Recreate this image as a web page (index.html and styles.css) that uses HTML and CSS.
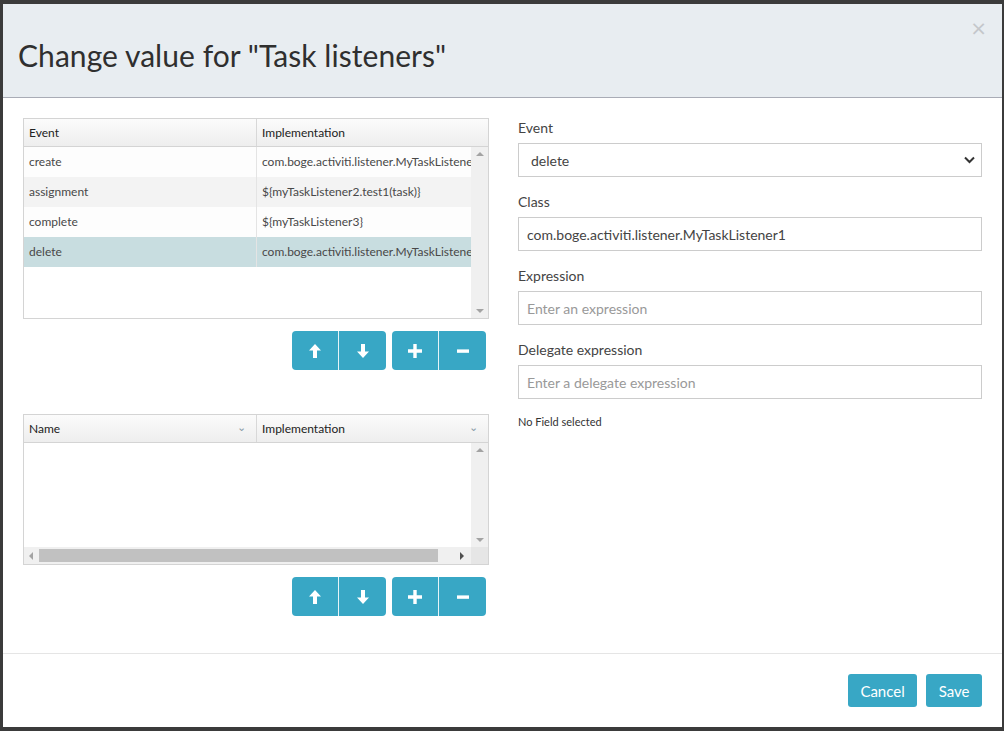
FILE: index.html
```html
<!DOCTYPE html>
<html lang="en">
  <head>
    <meta charset="UTF-8" />
    <title>Change value for "Task listeners"</title>
    <link rel="stylesheet" href="styles.css">
  </head>
  <body>
    <div class="modal">
      <div class="modal-header">
        <h2 class="modal-title">Change value for "Task listeners"</h2>
        <button class="close" type="button">&times;</button>
      </div>

      <div class="modal-body">
        <div class="left-col">
          <!-- listeners grid -->
          <div class="grid grid-listeners">
            <div class="grid-head">
              <div class="cell col-first">Event</div>
              <div class="cell col-second">Implementation</div>
            </div>
            <div class="grid-body">
              <div class="grid-rows">
                <div class="row">
                  <div class="cell col-first">create</div>
                  <div class="cell col-second">com.boge.activiti.listener.MyTaskListener1</div>
                </div>
                <div class="row row-alt">
                  <div class="cell col-first">assignment</div>
                  <div class="cell col-second">${myTaskListener2.test1(task)}</div>
                </div>
                <div class="row">
                  <div class="cell col-first">complete</div>
                  <div class="cell col-second">${myTaskListener3}</div>
                </div>
                <div class="row row-selected">
                  <div class="cell col-first">delete</div>
                  <div class="cell col-second">com.boge.activiti.listener.MyTaskListener1</div>
                </div>
              </div>
              <div class="vscroll">
                <span class="tri tri-up"></span>
                <span class="tri tri-down"></span>
              </div>
            </div>
          </div>

          <div class="grid-actions">
            <div class="btn-group">
              <button class="btn btn-icon" type="button">
                <svg width="12" height="14" viewBox="0 0 12 14"><path d="M6 0 L12 6.5 L8 6.5 L8 14 L4 14 L4 6.5 L0 6.5 Z" fill="#fff"/></svg>
              </button>
              <button class="btn btn-icon" type="button">
                <svg width="12" height="14" viewBox="0 0 12 14"><path d="M6 14 L12 7.5 L8 7.5 L8 0 L4 0 L4 7.5 L0 7.5 Z" fill="#fff"/></svg>
              </button>
            </div>
            <div class="btn-group">
              <button class="btn btn-icon" type="button">
                <svg width="14" height="14" viewBox="0 0 14 14"><path d="M5.3 0 H8.7 V5.3 H14 V8.7 H8.7 V14 H5.3 V8.7 H0 V5.3 H5.3 Z" fill="#fff"/></svg>
              </button>
              <button class="btn btn-icon" type="button">
                <svg width="14" height="14" viewBox="0 0 14 14"><rect x="1" y="5.4" width="12" height="3.4" fill="#fff"/></svg>
              </button>
            </div>
          </div>

          <!-- fields grid -->
          <div class="grid grid-fields">
            <div class="grid-head">
              <div class="cell col-first">Name<span class="sort">&#8964;</span></div>
              <div class="cell col-second">Implementation<span class="sort">&#8964;</span></div>
            </div>
            <div class="grid-body">
              <div class="grid-rows"></div>
              <div class="vscroll">
                <span class="tri tri-up"></span>
                <span class="tri tri-down"></span>
              </div>
            </div>
            <div class="hscroll">
              <span class="tri tri-left"></span>
              <div class="hscroll-thumb"></div>
              <span class="tri tri-right"></span>
              <div class="hscroll-corner"></div>
            </div>
          </div>

          <div class="grid-actions">
            <div class="btn-group">
              <button class="btn btn-icon" type="button">
                <svg width="12" height="14" viewBox="0 0 12 14"><path d="M6 0 L12 6.5 L8 6.5 L8 14 L4 14 L4 6.5 L0 6.5 Z" fill="#fff"/></svg>
              </button>
              <button class="btn btn-icon" type="button">
                <svg width="12" height="14" viewBox="0 0 12 14"><path d="M6 14 L12 7.5 L8 7.5 L8 0 L4 0 L4 7.5 L0 7.5 Z" fill="#fff"/></svg>
              </button>
            </div>
            <div class="btn-group">
              <button class="btn btn-icon" type="button">
                <svg width="14" height="14" viewBox="0 0 14 14"><path d="M5.3 0 H8.7 V5.3 H14 V8.7 H8.7 V14 H5.3 V8.7 H0 V5.3 H5.3 Z" fill="#fff"/></svg>
              </button>
              <button class="btn btn-icon" type="button">
                <svg width="14" height="14" viewBox="0 0 14 14"><rect x="1" y="5.4" width="12" height="3.4" fill="#fff"/></svg>
              </button>
            </div>
          </div>
        </div>

        <div class="right-col">
          <div class="form-group">
            <label class="form-label">Event</label>
            <div class="select">
              <span>delete</span>
              <svg width="11" height="8" viewBox="0 0 11 8"><path d="M1 1.5 L5.5 6 L10 1.5" stroke="#333" stroke-width="2" fill="none"/></svg>
            </div>
          </div>
          <div class="form-group">
            <label class="form-label">Class</label>
            <input class="form-control" type="text" value="com.boge.activiti.listener.MyTaskListener1">
          </div>
          <div class="form-group">
            <label class="form-label">Expression</label>
            <input class="form-control" type="text" placeholder="Enter an expression">
          </div>
          <div class="form-group">
            <label class="form-label">Delegate expression</label>
            <input class="form-control" type="text" placeholder="Enter a delegate expression">
          </div>
          <p class="no-field">No Field selected</p>
        </div>
      </div>

      <div class="modal-footer">
        <button class="btn btn-text" type="button">Cancel</button>
        <button class="btn btn-text" type="button">Save</button>
      </div>
    </div>
  </body>
</html>
```

FILE: styles.css
```css
* {
  margin: 0;
  padding: 0;
  box-sizing: border-box;
}

body {
  font-family: "Lato", "Open Sans", sans-serif;
  background: #3b3b3b;
  color: #333;
  padding: 4px 2px 4px 3px;
  height: 731px;
  overflow: hidden;
}

.modal {
  width: 999px;
  height: 723px;
  background: #fff;
  display: flex;
  flex-direction: column;
}

/* header */
.modal-header {
  height: 94px;
  flex-shrink: 0;
  background: #e8edf1;
  border-bottom: 1px solid #a9acb6;
  display: flex;
  justify-content: space-between;
  align-items: flex-start;
  padding: 0 15px 0 15px;
}

.modal-title {
  font-size: 30px;
  font-weight: 400;
  color: #2f2f2f;
  margin-top: 33px;
  letter-spacing: 0.05px;
}

.close {
  border: none;
  background: none;
  color: #c4c7cb;
  font-family: "DejaVu Sans", sans-serif;
  font-size: 20px;
  line-height: 1;
  margin-top: 14px;
  margin-right: 0;
}

/* body */
.modal-body {
  flex: 1;
  min-height: 0;
  display: flex;
  gap: 29px;
  padding: 20px 20px 0 20px;
  border-bottom: 1px solid #e5e5e5;
}

.left-col {
  width: 466px;
  flex-shrink: 0;
}

.right-col {
  flex: 1;
}

/* grids */
.grid {
  border: 1px solid #d4d4d4;
  font-size: 12px;
}

.grid-head {
  display: flex;
  height: 28px;
  background: linear-gradient(#fbfbfb, #eeeeee);
  border-bottom: 1px solid #d4d4d4;
  color: #222;
}

.grid-head .cell {
  line-height: 27px;
}

.cell {
  padding-left: 5px;
  white-space: nowrap;
  overflow: hidden;
}

.col-first {
  width: 233px;
  flex-shrink: 0;
  border-right: 1px solid #d8d8d8;
}

.col-second {
  flex: 1;
}

.sort {
  float: right;
  color: #8a9aa8;
  font-size: 11px;
  margin-right: 10px;
  line-height: 24px;
}

.grid-body {
  display: flex;
}

.grid-listeners .grid-body {
  height: 171px;
}

.grid-fields .grid-body {
  height: 104px;
}

.grid-rows {
  flex: 1;
  overflow: hidden;
}

.row {
  display: flex;
  height: 30px;
  line-height: 30px;
  background: #fdfdfd;
  color: #484848;
}

.row .col-first {
  border-right-color: #e4e4e4;
}

.row-alt {
  background: #f3f3f3;
}

.row-selected {
  background: #c8dde0;
}

.vscroll {
  width: 17px;
  background: #f0f0f0;
  display: flex;
  flex-direction: column;
  justify-content: space-between;
  align-items: center;
  padding: 5px 0;
}

.tri {
  width: 0;
  height: 0;
  border-style: solid;
}

.tri-up {
  border-width: 0 4px 4px 4px;
  border-color: transparent transparent #a3a3a3 transparent;
}

.tri-down {
  border-width: 4px 4px 0 4px;
  border-color: #a3a3a3 transparent transparent transparent;
}

.tri-left {
  border-width: 4px 4px 4px 0;
  border-color: transparent #a3a3a3 transparent transparent;
  margin: 0 6px 0 5px;
}

.tri-right {
  border-width: 4px 0 4px 4px;
  border-color: transparent transparent transparent #505050;
  margin: 0 7px 0 22px;
}

.hscroll {
  height: 17px;
  background: #f0f0f0;
  display: flex;
  align-items: center;
}

.hscroll-thumb {
  width: 399px;
  height: 13px;
  background: #c1c1c1;
}

.hscroll-corner {
  margin-left: auto;
  width: 17px;
  height: 17px;
  background: #e6e6e6;
}

/* button groups */
.grid-actions {
  display: flex;
  justify-content: flex-end;
  gap: 6px;
  padding-right: 3px;
  margin: 12px 0 44px;
}

.btn-group {
  display: flex;
}

.btn {
  border: none;
  background: #38a7c5;
  color: #fff;
  font-family: "Lato", sans-serif;
  cursor: pointer;
}

.btn-icon {
  width: 47px;
  height: 39px;
  display: flex;
  align-items: center;
  justify-content: center;
}

.btn-group .btn-icon:first-child {
  border-radius: 4px 0 0 4px;
  border-right: 1px solid #e6f4f8;
}

.btn-group .btn-icon:last-child {
  border-radius: 0 4px 4px 0;
}

/* form */
.form-group {
  margin-bottom: 15px;
}

.form-label {
  display: block;
  font-size: 14px;
  line-height: 20px;
  margin-bottom: 5px;
  color: #444;
}

.select,
.form-control {
  width: 100%;
  height: 34px;
  border: 1px solid #cccccc;
  font-family: "Lato", sans-serif;
  font-size: 14px;
  color: #444;
  background: #fff;
}

.select {
  display: flex;
  align-items: center;
  justify-content: space-between;
  padding: 0 6px 0 12px;
}

.form-control {
  padding: 0 8px;
}

.form-control::placeholder {
  color: #999;
}

.no-field {
  font-size: 11px;
  line-height: 16px;
  color: #333;
}

/* footer */
.modal-footer {
  flex-shrink: 0;
  display: flex;
  justify-content: flex-end;
  gap: 9px;
  padding: 20px 20px 20px 0;
}

.btn-text {
  height: 33px;
  padding: 0 12.5px;
  font-size: 15px;
  border-radius: 3px;
}
```
